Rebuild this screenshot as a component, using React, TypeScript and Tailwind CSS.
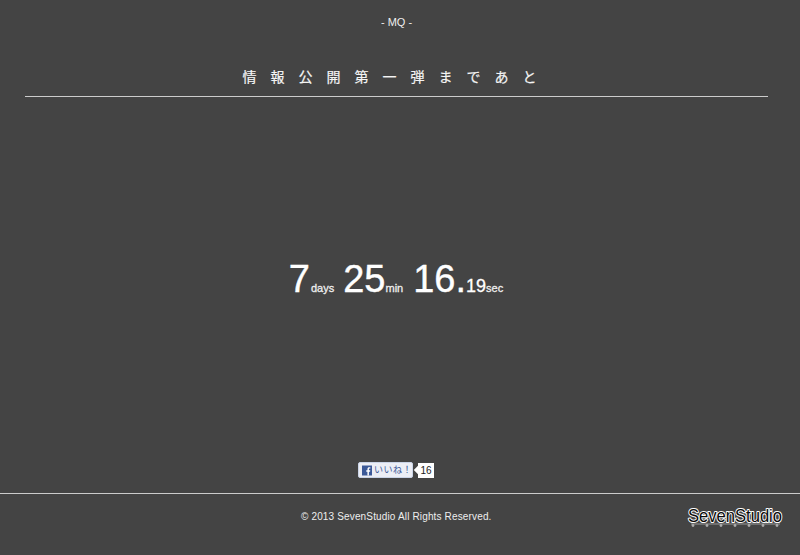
export default function App() {
  const sans = "font-['Liberation_Sans','Noto_Sans_CJK_JP',sans-serif]";
  return (
    <div className={`h-[555px] w-[800px] overflow-hidden bg-[#444444] text-white flex flex-col ${sans}`}>
      <header className="pl-[25px] pr-[32px]">
        <p className="pt-[16px] h-[60px] text-center text-[11px] leading-[13px] text-[#eeeeee]">- MQ -</p>
        <h1 className="h-[37px] border-b border-[#cccccc] text-center text-[14px] leading-[20px] pt-[7px] tracking-[14px] font-normal text-[#f4f4f4] [-webkit-text-stroke:0.2px_#f4f4f4]">情報公開第一弾まであと</h1>
      </header>
      <main className="h-[360px] flex items-start justify-center pr-[8px]">
        <div className="mt-[159px] flex items-baseline text-white">
          <span className="text-[38px] leading-[46px] [-webkit-text-stroke:0.4px_#ffffff]">7</span>
          <span className="ml-[1px] text-[11px] text-[#eeeeee] [-webkit-text-stroke:0.3px_#eeeeee]">days</span>
          <span className="ml-[9px] text-[38px] leading-[46px] [-webkit-text-stroke:0.4px_#ffffff]">25</span>
          <span className="text-[11px] text-[#eeeeee] [-webkit-text-stroke:0.3px_#eeeeee]">min</span>
          <span className="ml-[10px] text-[38px] leading-[46px] [-webkit-text-stroke:0.4px_#ffffff]">16.</span>
          <span className="text-[18px] [-webkit-text-stroke:0.3px_#ffffff]">19</span>
          <span className="text-[11px] text-[#eeeeee] [-webkit-text-stroke:0.3px_#eeeeee]">sec</span>
        </div>
      </main>
      <div className="h-[36px] pt-[5px] flex items-start justify-center pr-[8px]">
        <div className="flex items-center">
          <div className="h-[16px] w-[55px] bg-[#eceef5] border border-[#cad4e7] rounded-[2px] flex items-center pl-[3px] gap-[2px]">
            <svg width="11" height="11" viewBox="0 0 11 11">
              <rect width="11" height="11" fill="#3b5998" />
              <path d="M7.6 11V6.8h1.3l.2-1.6H7.6v-1c0-.5.1-.8.8-.8h.8V1.9C9 1.9 8.6 1.8 8 1.8c-1.2 0-2 .7-2 2.1v1.3H4.7v1.6H6V11z" fill="#ffffff" />
            </svg>
            <span className="text-[9px] leading-[14px] text-[#3b5998] tracking-[0.5px] whitespace-nowrap">いいね！</span>
          </div>
          <div className="relative ml-[5px] h-[15px] w-[16px] bg-white text-[#222222] text-[10px] leading-[15px] text-center">
            16
            <span className="absolute left-[-3px] top-[4px] h-[6px] w-[6px] rotate-45 bg-white" />
          </div>
        </div>
      </div>
      <footer className="flex-1 border-t border-[#cccccc] flex items-start justify-between">
        <p className="ml-[301px] mt-[16px] text-[10px] leading-[13px] tracking-[0.15px] text-[#eeeeee]">© 2013 SevenStudio All Rights Reserved.</p>
        <svg width="116" height="36" viewBox="0 0 116 36" className="mr-[1px] mt-[6px]">
          <text x="5" y="22" fontSize="19" fontFamily="'Liberation Sans',sans-serif" textLength="94" lengthAdjust="spacingAndGlyphs" fill="#0a0a0a" stroke="#ffffff" strokeWidth="2" paintOrder="stroke" strokeLinejoin="round">SevenStudio</text>
          <path d="M8 24H97" stroke="#999999" strokeWidth="1" />
          {[10, 24, 38, 52, 66, 80, 94].map((x) => (
            <circle key={x} cx={x} cy={25.5} r={1.4} fill="#aaaaaa" />
          ))}
        </svg>
      </footer>
    </div>
  );
}
